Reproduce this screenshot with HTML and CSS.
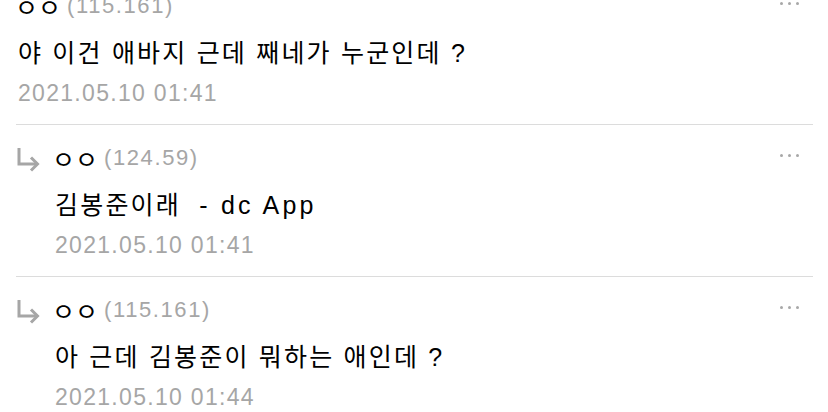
FILE: index.html
```html
<!DOCTYPE html>
<html lang="ko">

<head>
    <meta charset="UTF-8">
    <meta name="viewport" content="width=device-width, initial-scale=1.0">
    <title>댓글</title>
    <link rel="stylesheet" href="styles.css">
</head>

<body>
    <div class="thread">
        <div class="comment">
            <div class="head">
                <span class="name">ㅇㅇ</span>
                <span class="ip">(115.161)</span>
                <span class="more"><i></i><i></i><i></i></span>
            </div>
            <p class="text">야 이건 애바지 근데 째네가 누군인데 ?</p>
            <div class="date">2021.05.10 01:41</div>
        </div>

        <div class="comment reply">
            <svg class="arrow" width="24" height="26" viewBox="0 0 24 26">
                <path d="M3 1 V17 H21" />
                <path d="M15 10.5 L21.5 17 L15 23.5" />
            </svg>
            <div class="body">
                <div class="head">
                    <span class="name">ㅇㅇ</span>
                    <span class="ip">(124.59)</span>
                    <span class="more"><i></i><i></i><i></i></span>
                </div>
                <p class="text">김봉준이래&nbsp; <span class="sign">- dc App</span></p>
                <div class="date">2021.05.10 01:41</div>
            </div>
        </div>

        <div class="comment reply">
            <svg class="arrow" width="24" height="26" viewBox="0 0 24 26">
                <path d="M3 1 V17 H21" />
                <path d="M15 10.5 L21.5 17 L15 23.5" />
            </svg>
            <div class="body">
                <div class="head">
                    <span class="name">ㅇㅇ</span>
                    <span class="ip">(115.161)</span>
                    <span class="more"><i></i><i></i><i></i></span>
                </div>
                <p class="text">아 근데 김봉준이 뭐하는 애인데 ?</p>
                <div class="date">2021.05.10 01:44</div>
            </div>
        </div>
    </div>
</body>

</html>
```

FILE: styles.css
```css
body {
    margin: 0;
    background: #fff;
    font-family: "Liberation Sans", "Noto Sans CJK KR", sans-serif;
    color: #000;
    overflow: hidden;
}

.thread {
    margin: -27px 15px 0 16px;
}

.comment {
    padding: 18px 14px 16px 2px;
    border-bottom: 1px solid #dcdcdc;
}

.reply {
    display: flex;
    padding-left: 0;
}

.reply .body {
    flex: 1;
    padding-left: 15px;
}

.arrow {
    flex: none;
    margin-top: 4px;
    fill: none;
    stroke: #a6a6a6;
    stroke-width: 3;
}

.head {
    display: flex;
    align-items: center;
    height: 30px;
}

.name {
    font-size: 25px;
    margin-left: -3px;
    margin-right: 6px;
}

.ip {
    font-size: 22px;
    color: #a6a6a6;
    letter-spacing: 1.6px;
}

.more {
    display: flex;
    gap: 5px;
    margin-left: auto;
    margin-bottom: 6px;
}

.more i {
    width: 3px;
    height: 3px;
    border-radius: 50%;
    background: #a8a8a8;
}

.text {
    margin: 17px 0 0;
    font-size: 25px;
    line-height: 30px;
    letter-spacing: 2.2px;
}

.sign {
    letter-spacing: 3.2px;
}

.date {
    margin-top: 10px;
    font-size: 23px;
    line-height: 30px;
    color: #a6a6a6;
    letter-spacing: 1.3px;
}
```
